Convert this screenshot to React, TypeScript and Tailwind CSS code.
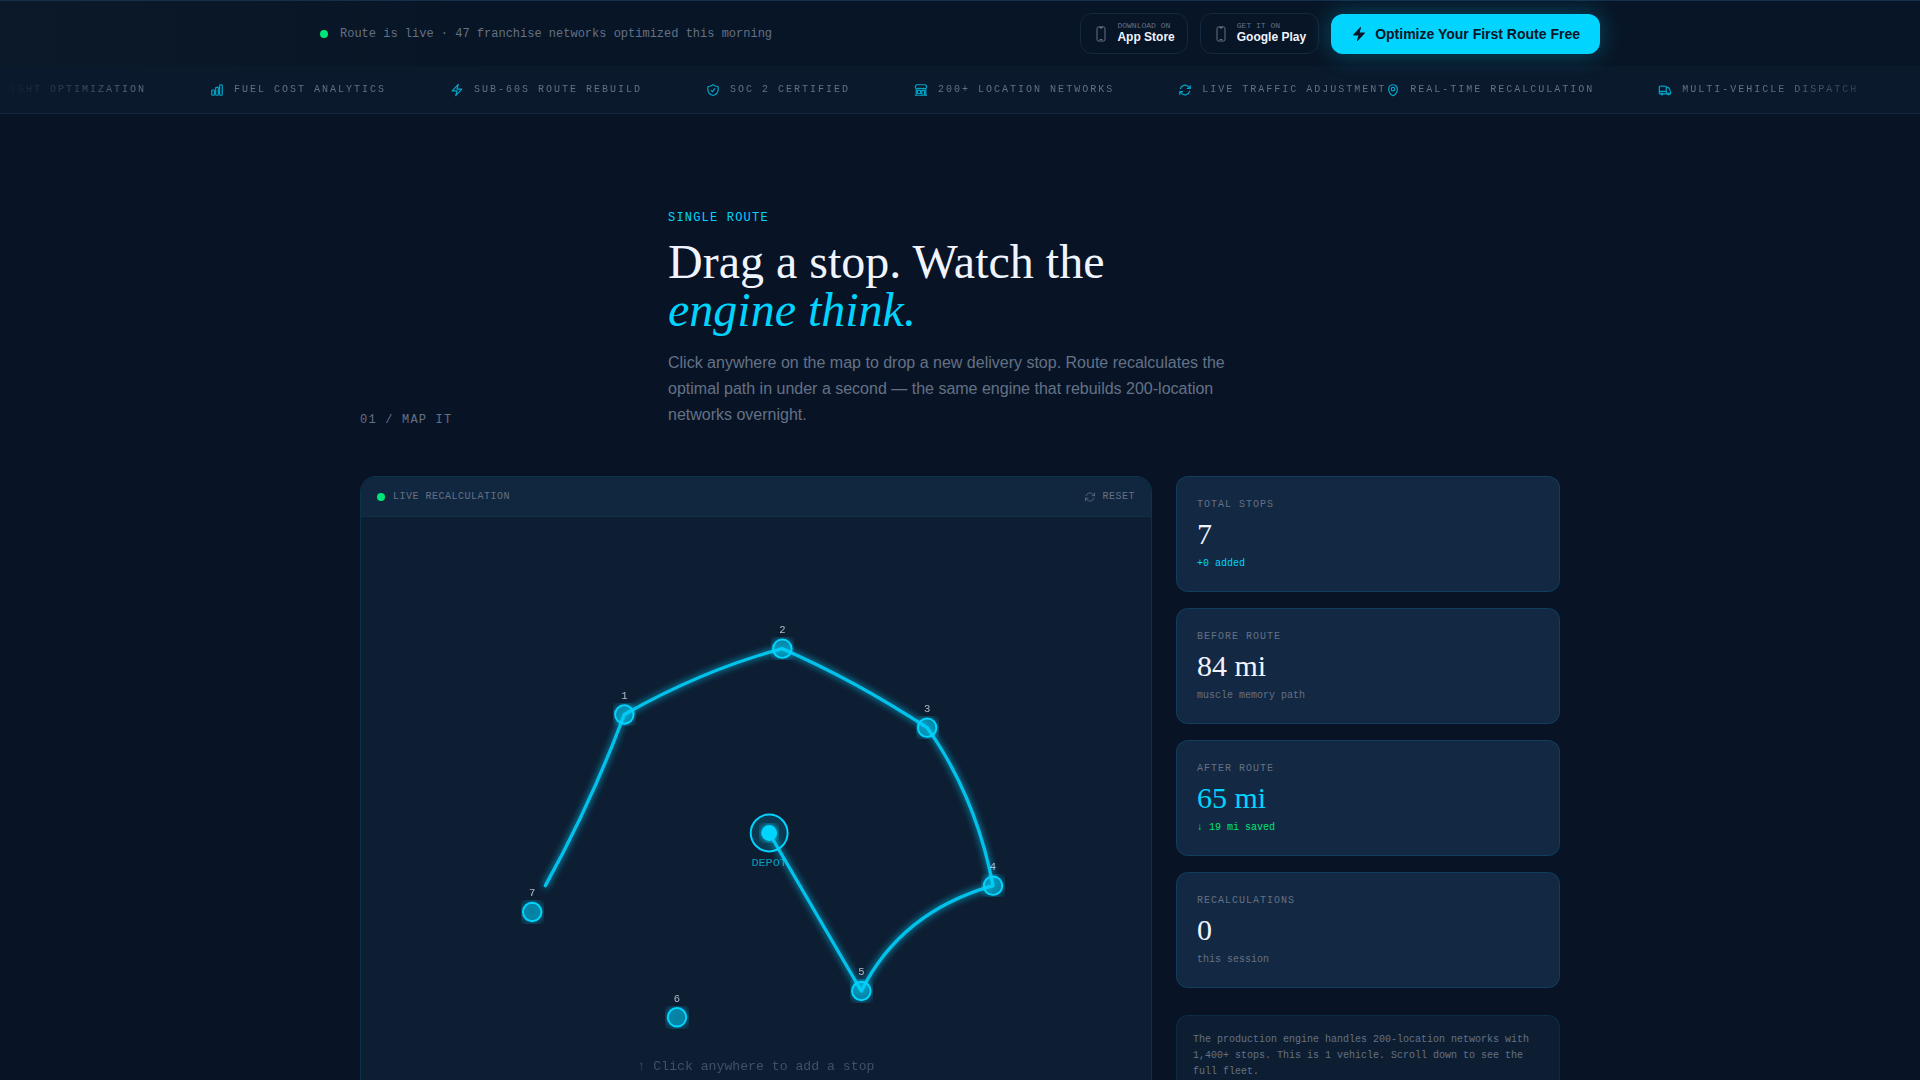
import type { IconType } from "react-icons";
import {
  HiBolt,
  HiOutlineArrowPath,
  HiOutlineBolt,
  HiOutlineBuildingStorefront,
  HiOutlineChartBar,
  HiOutlineDevicePhoneMobile,
  HiOutlineMapPin,
  HiOutlineMoon,
  HiOutlineShieldCheck,
  HiOutlineTruck,
} from "react-icons/hi2";

const mono = "font-['Liberation_Mono',monospace]";
const serif = "font-['Liberation_Serif',serif]";

type TickerItem = { icon: IconType; label: string };

const leadingItems: TickerItem[] = [
  { icon: HiOutlineMoon, label: "Overnight optimization" },
  { icon: HiOutlineChartBar, label: "Fuel cost analytics" },
  { icon: HiOutlineBolt, label: "Sub-60s route rebuild" },
  { icon: HiOutlineShieldCheck, label: "SOC 2 certified" },
  { icon: HiOutlineBuildingStorefront, label: "200+ location networks" },
  { icon: HiOutlineArrowPath, label: "Live traffic adjustment" },
];

const trailingItems: TickerItem[] = [
  { icon: HiOutlineMapPin, label: "Real-time recalculation" },
  { icon: HiOutlineTruck, label: "Multi-vehicle dispatch" },
];

const stops = [
  { id: 1, x: 200, y: 150 },
  { id: 2, x: 320, y: 100 },
  { id: 3, x: 430, y: 160 },
  { id: 4, x: 480, y: 280 },
  { id: 5, x: 380, y: 360 },
  { id: 6, x: 240, y: 380 },
  { id: 7, x: 130, y: 300 },
];

const stats = [
  { label: "Total stops", value: "7", note: "+0 added", valueColor: "text-[#f0f4ff]", noteColor: "text-[#00d4ff]" },
  { label: "Before route", value: "84 mi", note: "muscle memory path", valueColor: "text-[#f0f4ff]", noteColor: "text-[#647185]" },
  { label: "After route", value: "65 mi", note: "↓ 19 mi saved", valueColor: "text-[#00d4ff]", noteColor: "text-[#00e676]" },
  { label: "Recalculations", value: "0", note: "this session", valueColor: "text-[#f0f4ff]", noteColor: "text-[#647185]" },
];

const StoreLink = ({ caption, name }: { caption: string; name: string }) => (
  <a
    href="#download"
    className="flex items-center gap-2 rounded-xl border border-[#14283f] px-3 py-2"
  >
    <HiOutlineDevicePhoneMobile className="size-4 text-[#647185]" />
    <span className="flex flex-col">
      <span className={`${mono} text-[8px] leading-none text-[#647185] uppercase`}>
        {caption}
      </span>
      <span className="text-xs leading-[15px] font-bold text-[#f0f4ff]">{name}</span>
    </span>
  </a>
);

const TopBar = () => (
  <header className="relative z-10 border-t border-[#14304a] bg-linear-to-r from-[#0b1929] to-[#081526] to-25%">
    <div className="mx-auto flex max-w-7xl items-center justify-between py-3">
      <div className="flex items-center gap-3">
        <span className="size-2 rounded-full bg-[#00e676]" />
        <p className={`${mono} text-xs text-[#647185]`}>
          Route is live · 47 franchise networks optimized this morning
        </p>
      </div>
      <div className="flex items-center gap-3">
        <StoreLink caption="Download on" name="App Store" />
        <StoreLink caption="Get it on" name="Google Play" />
        <button
          type="button"
          className="flex items-center gap-2 rounded-xl bg-[#00d4ff] px-5 py-[10px] text-sm font-bold text-[#0a1628] shadow-[0_0_24px_rgba(0,212,255,0.3)]"
        >
          <HiBolt className="size-4" />
          Optimize Your First Route Free
        </button>
      </div>
    </div>
  </header>
);

const TickerGroup = ({ items }: { items: TickerItem[] }) => (
  <ul className="flex shrink-0 gap-16">
    {items.map(({ icon: Icon, label }) => (
      <li key={label} className="flex shrink-0 items-center gap-[10px]">
        <Icon className="size-[14px] stroke-2 text-[#00d4ff]/75" />
        <span className="whitespace-nowrap uppercase">{label}</span>
      </li>
    ))}
  </ul>
);

const Ticker = () => (
  <div className="overflow-hidden border-b border-[#13283c] bg-[#0a192c] py-4">
    <div className="mask-[linear-gradient(to_right,transparent,black_8%,black_92%,transparent)]">
      <div
        className={`${mono} -ml-[54px] flex w-max text-[10px] leading-[15px] tracking-[0.2em] text-[#647185]`}
      >
        <TickerGroup items={leadingItems} />
        <TickerGroup items={trailingItems} />
      </div>
    </div>
  </div>
);

const RouteMap = () => (
  <svg viewBox="0 0 600 440" className={`${mono} block w-full cursor-crosshair`}>
    <defs>
      <filter id="glow">
        <feGaussianBlur stdDeviation="3" result="blur" />
        <feMerge>
          <feMergeNode in="blur" />
          <feMergeNode in="SourceGraphic" />
        </feMerge>
      </filter>
    </defs>

    <path
      d="M310 240 L380 360 Q410 300 480 280 Q467 212 430 160 Q375 124 320 100 Q260 116 200 150 Q175 217 140 280"
      fill="none"
      stroke="#00d4ff"
      strokeWidth="2.5"
      strokeLinecap="round"
      strokeLinejoin="round"
      opacity="0.9"
      filter="url(#glow)"
    />

    <circle cx="310" cy="240" r="14" fill="#00d4ff" fillOpacity="0.15" stroke="#00d4ff" strokeWidth="1.5" />
    <circle cx="310" cy="240" r="6" fill="#00d4ff" filter="url(#glow)" />
    <text x="310" y="265" textAnchor="middle" fontSize="9" fill="#00d4ff" opacity="0.7">
      DEPOT
    </text>

    {stops.map((stop) => (
      <g key={stop.id}>
        <circle
          cx={stop.x}
          cy={stop.y}
          r="7"
          fill="#00d4ff"
          fillOpacity="0.3"
          stroke="#00d4ff"
          strokeWidth="1.5"
          filter="url(#glow)"
        />
        <text x={stop.x} y={stop.y - 12} textAnchor="middle" fontSize="8" fill="#f0f4ff" opacity="0.7">
          {stop.id}
        </text>
      </g>
    ))}

    <text x="300" y="420" textAnchor="middle" fontSize="10" fill="#647185" opacity="0.6">
      ↑ Click anywhere to add a stop
    </text>
  </svg>
);

const App = () => {
  return (
    <div className="min-h-screen bg-[#081426] font-['Liberation_Sans',sans-serif] text-[#f0f4ff]">
      <TopBar />
      <Ticker />

      <section className="mx-auto max-w-[1200px] py-24">
        <div className="mb-12 grid grid-cols-12 items-end gap-8">
          <p className={`${mono} col-span-3 text-xs tracking-widest text-[#647185] uppercase`}>
            01 / Map it
          </p>
          <div className="col-span-9">
            <p className={`${mono} mb-3 text-xs tracking-widest text-[#00d4ff] uppercase`}>
              Single route
            </p>
            <h2 className={`${serif} text-5xl`}>
              Drag a stop. Watch the
              <br />
              <em className="text-[#00d4ff]">engine think.</em>
            </h2>
            <p className="mt-4 max-w-xl leading-[26px] text-[#647185]">
              Click anywhere on the map to drop a new delivery stop. Route
              recalculates the optimal path in under a second — the same engine
              that rebuilds 200-location networks overnight.
            </p>
          </div>
        </div>

        <div className="grid grid-cols-3 gap-6">
          <div className="col-span-2 overflow-hidden rounded-2xl border border-[#00d4ff]/12 bg-[#0d1e33]">
            <div
              className={`${mono} flex items-center justify-between border-b border-[#00d4ff]/5 bg-[#11273f] px-4 py-3 text-[10px] leading-[15px] tracking-wider text-[#647185]`}
            >
              <div className="flex items-center gap-2">
                <span className="size-2 rounded-full bg-[#00e676]" />
                <span className="uppercase">Live recalculation</span>
              </div>
              <button type="button" className="flex items-center gap-[6px] tracking-wider uppercase">
                <HiOutlineArrowPath className="size-3" />
                Reset
              </button>
            </div>
            <RouteMap />
          </div>

          <div className="flex flex-col gap-4">
            {stats.map((stat) => (
              <div
                key={stat.label}
                className={`${mono} rounded-xl border border-[#00d4ff]/12 bg-[#132842] p-5 text-[10px] leading-[15px]`}
              >
                <p className="tracking-widest text-[#647185] uppercase">{stat.label}</p>
                <p className={`${serif} ${stat.valueColor} my-1 text-3xl`}>{stat.value}</p>
                <p className={stat.noteColor}>{stat.note}</p>
              </div>
            ))}
            <p
              className={`${mono} mt-auto rounded-xl border border-[#00d4ff]/8 bg-[#0d1e33] p-4 text-[10px] leading-4 text-[#647185]`}
            >
              The production engine handles 200-location networks with 1,400+
              stops. This is 1 vehicle. Scroll down to see the full fleet.
            </p>
          </div>
        </div>
      </section>
    </div>
  );
};
export default App;
